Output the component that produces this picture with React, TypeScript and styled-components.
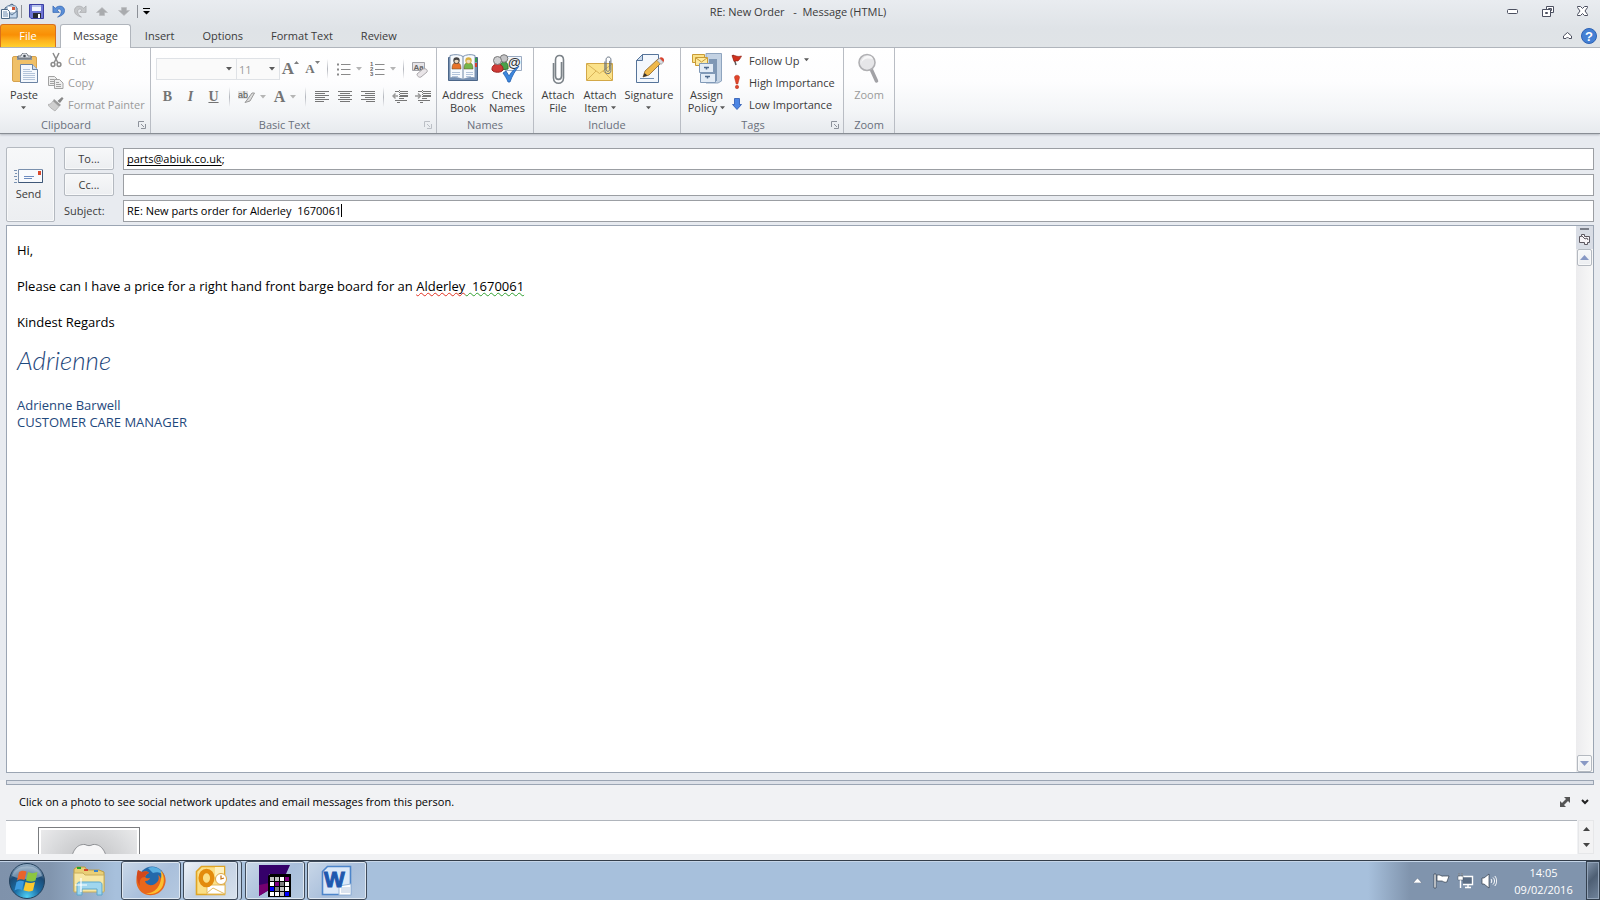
import React from 'react';
import styled, { createGlobalStyle, css } from 'styled-components';

const Global = createGlobalStyle`
  *, *::before, *::after { box-sizing: border-box; }
  body { margin: 0; background: #e8ebf0; }
  button, input, select {
    font: inherit; color: inherit; margin: 0; padding: 0;
    border: 0; background: none; border-radius: 0; outline: none;
  }
`;

const Page = styled.div`
  display: flex;
  flex-direction: column;
  min-height: 100vh;
  font: 11px/13px "Open Sans", "Noto Sans", sans-serif;
  color: #3b3b3b;
`;

/* Title bar and tabs */

const Chrome = styled.header`
  background: linear-gradient(#e9ecf0, #dfe3e7 60%, #e0e4e7);
`;
const TitleBar = styled.div`
  display: grid;
  grid-template-columns: 1fr auto 1fr;
  align-items: center;
  height: 24px;
  padding-bottom: 2px;
`;
const QuickAccess = styled.div`
  display: flex;
  align-items: center;
`;
const QuickButton = styled.button<{ $w?: number }>`
  width: ${p => p.$w ?? 22}px;
  height: 22px;
  display: grid;
  place-items: center;
`;
const QuickRule = styled.span`
  width: 1px;
  height: 13px;
  margin: 0 2px;
  background: #8c9097;
`;
const Title = styled.h1`
  margin: 0;
  padding-right: 4px;
  font-size: 11px;
  font-weight: 400;
  white-space: pre;
`;
const WindowButtons = styled.div`
  display: flex;
  justify-content: flex-end;
`;
const WindowButton = styled.button`
  width: 35px;
  height: 22px;
  display: grid;
  place-items: center;
`;
const TabRow = styled.nav`
  display: flex;
  height: 24px;
  border-bottom: 1px solid #b0b5bc;
`;
const Tab = styled.button<{ $active?: boolean }>`
  height: 24px;
  padding: 0 14px 2px;
  ${p => p.$active && css`
    padding: 0 12px 2px;
    background: #fff;
    border: 1px solid #b0b5bc;
    border-bottom: 0;
    border-radius: 3px 3px 0 0;
  `}
`;
const FileTab = styled.button`
  width: 56px;
  height: 23px;
  margin-right: 4px;
  padding-bottom: 1px;
  color: #fff;
  border: 1px solid #d9701c;
  border-bottom: 0;
  border-radius: 3px 3px 0 0;
  background: linear-gradient(#f9a51c, #f98f05 45%, #fdb21d 70%, #ffd02e);
`;
const TabTools = styled.div`
  display: flex;
  align-items: center;
  gap: 6px;
  margin-left: auto;
  padding-right: 3px;
`;
const ToolButton = styled.button`
  display: grid;
  place-items: center;
  min-width: 16px;
`;

/* Ribbon */

const Ribbon = styled.div`
  display: flex;
  height: 86px;
  background: linear-gradient(#fff, #fdfdfe 40%, #f3f5f7 75%, #e7eaee);
  border-bottom: 1px solid #888d94;
  box-shadow: 0 1px 2px #b4b9c1;
`;
const Group = styled.section<{ $w: number }>`
  display: flex;
  flex-direction: column;
  flex: 0 0 ${p => p.$w}px;
  padding-top: 2px;
  border-right: 1px solid #b9bdc4;
`;
const GroupBody = styled.div<{ $pad?: number }>`
  display: flex;
  height: 66px;
  padding: 0 ${p => p.$pad ?? 0}px;
`;
const GroupTitle = styled.div`
  display: flex;
  align-items: center;
  height: 17px;
  color: #696f7b;
  > h2 { flex: 1; margin: 0; font-size: 11px; font-weight: 400; text-align: center; }
`;
const Launcher = styled.button<{ $dim?: boolean }>`
  width: 18px;
  height: 8px;
  padding-left: 6px;
  display: grid;
  opacity: ${p => (p.$dim ? 0.5 : 1)};
`;
const LargeButton = styled.button<{ $w: number }>`
  display: flex;
  flex-direction: column;
  align-items: center;
  flex: 0 0 ${p => p.$w}px;
  padding-top: 3px;
  gap: 3px;
  &:disabled { color: #9a9a9a; }
`;
const LargeLabel = styled.span`
  display: flex;
  flex-direction: column;
  align-items: center;
`;
const LabelLine = styled.span`
  display: flex;
  align-items: center;
  justify-content: center;
  gap: 3px;
  height: 13px;
  white-space: nowrap;
`;
const SmallColumn = styled.div`
  display: flex;
  flex-direction: column;
`;
const SmallButton = styled.button`
  display: flex;
  align-items: center;
  gap: 4px;
  height: 22px;
  padding-bottom: 2px;
  white-space: nowrap;
  &:disabled { color: #9a9a9a; }
`;
const TextTools = styled.div`
  display: flex;
  flex-direction: column;
  padding: 5px 0 0 5px;
`;
const TextRow = styled.div`
  display: flex;
  align-items: center;
  height: 28px;
`;
const IconButton = styled.button<{ $w?: number }>`
  width: ${p => p.$w ?? 23}px;
  height: 22px;
  display: flex;
  align-items: center;
  justify-content: center;
  gap: 5px;
`;
const ToolRule = styled.span`
  width: 1px;
  height: 20px;
  margin: 0 4px;
  background: linear-gradient(transparent, #b3b6bd, transparent);
`;
const ComboBox = styled.span<{ $w: number }>`
  position: relative;
  display: flex;
  width: ${p => p.$w}px;
  height: 22px;
  margin-right: -1px;
  border: 1px solid #dfe2e6;
  background: #fafafa;
  color: #9a9a9a;
  > select { appearance: none; flex: 1; padding: 0 2px; opacity: 1; }
  > svg { position: absolute; right: 4px; top: 8px; pointer-events: none; }
`;
const Glyph = styled.span<{ $size?: number; $italic?: boolean; $under?: boolean }>`
  font: ${p => (p.$italic ? 'italic' : 'normal')} 700 ${p => p.$size ?? 14}px/16px "Liberation Serif", serif;
  color: #747474;
  text-decoration: ${p => (p.$under ? 'underline' : 'none')};
`;
const MarkSvg = styled.svg`
  align-self: flex-start;
  margin: 3px 0 0 -5px;
`;

/* Message header */

const Compose = styled.main`
  display: flex;
  flex-direction: column;
  flex: 1;
  padding: 13px 6px 7px;
  gap: 3px;
`;
const Envelope = styled.form`
  display: grid;
  grid-template-columns: 49px 50px 1fr;
  grid-template-rows: 26px 26px 23px;
  column-gap: 9px;
`;
const raised = css`
  border: 1px solid #b4b9c0;
  border-radius: 2px;
  background: linear-gradient(#f7f8f9, #eceef1);
  box-shadow: inset 0 0 0 1px #f8f9fa;
`;
const SendButton = styled.button`
  ${raised}
  grid-row: 1 / 4;
  display: flex;
  flex-direction: column;
  align-items: center;
  justify-content: center;
  gap: 3px;
  padding-right: 4px;
`;
const AddressButton = styled.button`
  ${raised}
  height: 23px;
`;
const SubjectLabel = styled.label`
  align-self: center;
  white-space: nowrap;
`;
const Field = styled.div`
  display: flex;
  align-items: center;
  height: 22px;
  margin-top: 1px;
  padding: 0 3px 1px;
  border: 1px solid #9b9ea3;
  background: #fff;
  color: #000;
`;
const FieldInput = styled.input<{ $fit?: boolean; $under?: boolean }>`
  height: 19px;
  line-height: 19px;
  white-space: pre;
  ${p => (p.$fit ? css`field-sizing: content;` : css`flex: 1;`)}
  ${p => p.$under && css`text-decoration: underline; text-underline-offset: 2px; text-decoration-skip-ink: none;`}
`;
const Caret = styled.i`
  width: 1px;
  height: 13px;
  background: #000;
`;

/* Message body */

const Editor = styled.div`
  display: flex;
  flex: 1;
  border: 1px solid #9ba5b3;
  background: #fff;
`;
const Letter = styled.article`
  display: flex;
  flex-direction: column;
  flex: 1;
  gap: 18px;
  padding: 15px 10px;
  color: #000;
  font-size: 13px;
  line-height: 18px;
  > p { margin: 0; white-space: pre-wrap; }
`;
const Squiggle = styled.span<{ $color: string }>`
  text-decoration: underline wavy ${p => p.$color} 1px;
  text-underline-offset: 1px;
  text-decoration-skip-ink: none;
`;
const Signature = styled.p`
  padding-bottom: 8px;
  color: #1f497d;
  font: italic 300 26px/22px "Segoe Script", "Bradley Hand ITC", Lato, sans-serif;
`;
const SignatureBlock = styled.p`
  color: #1f497d;
  line-height: 17px;
`;
const ScrollTrack = styled.div`
  display: flex;
  flex-direction: column;
  align-items: center;
  width: 17px;
  background: linear-gradient(90deg, #ececee, #f8f8f8);
`;
const RulerToggle = styled.button`
  width: 17px;
  height: 23px;
  padding-bottom: 3px;
  background: #d9dde5;
  display: grid;
  place-items: center;
`;
const ScrollButton = styled.button`
  ${raised}
  width: 15px;
  height: 17px;
  display: grid;
  place-items: center;
  &:last-child { margin-top: auto; }
`;

/* People pane */

const People = styled.aside`
  padding: 0 6px 6px;
  background: #f1f2f4;
`;
const Splitter = styled.div`
  height: 5px;
  border: 1px solid #9ba5b3;
  background: #dde1e8;
`;
const PeopleHead = styled.div`
  display: flex;
  align-items: center;
  justify-content: space-between;
  height: 35px;
  padding: 0 1px 2px 13px;
  color: #000;
`;
const PeopleTools = styled.div`
  display: flex;
  gap: 4px;
`;
const PeopleBody = styled.div`
  display: flex;
  height: 34px;
`;
const PeopleList = styled.div`
  flex: 1;
  padding: 6px 32px 0;
  border-top: 1px solid #b0b5bc;
  background: #fff;
  overflow: hidden;
`;
const PhotoFrame = styled.div`
  display: flex;
  justify-content: center;
  width: 102px;
  height: 102px;
  padding: 2px;
  border: 1px solid #7b7d80;
  background: #fff;
`;
const Photo = styled.div`
  flex: 1;
  display: flex;
  justify-content: center;
  padding-top: 13px;
  background: radial-gradient(circle at 50% 40px, #b9babc, #dcdddf 45px, #ececed 65px);
`;
const MiniScroll = styled.div`
  display: flex;
  flex-direction: column;
  justify-content: space-around;
  align-items: center;
  width: 16px;
  margin-left: 1px;
  border: 1px solid #e6e7e9;
  background: #f3f3f4;
`;

/* Taskbar */

const Taskbar = styled.footer`
  display: flex;
  align-items: stretch;
  height: 40px;
  border-top: 1px solid #333d4a;
  box-shadow: inset 0 1px #c5d5e8;
  background:
    linear-gradient(90deg, #7f92ab, #8195ae 50px, transparent 115px),
    linear-gradient(270deg, #8094ad, #8094ad 190px, transparent 232px),
    #a7c0dc;
`;
const StartButton = styled.button`
  width: 54px;
  display: grid;
  place-items: center;
`;
const Pinned = styled.button`
  width: 67px;
  padding-left: 3px;
  display: grid;
  place-items: center;
`;
const TaskButton = styled.button<{ $active?: boolean; $stack?: boolean }>`
  width: 60px;
  height: 39px;
  margin-right: 2px;
  display: grid;
  place-items: center;
  border: 1px solid #3f4b5b;
  border-radius: 3px;
  background: ${p => (p.$active
    ? 'linear-gradient(135deg, #eef3f8, #c3d1e3 50%, #d9e3ee)'
    : 'linear-gradient(135deg, #c9d7e8, #a9bfdb 55%, #b5c9e0)')};
  box-shadow: inset 0 0 0 1px #dfe8f2${p => (p.$stack ? ', 3px 0 0 #c3d3e6, 4px 0 0 #3f4b5b' : '')};
  ${p => p.$stack && css`width: 55px; margin-right: 7px;`}
`;
const Tray = styled.div`
  display: flex;
  align-items: center;
  margin-left: auto;
`;
const TrayButton = styled.button`
  width: 24px;
  height: 30px;
  display: grid;
  place-items: center;
`;
const Clock = styled.time`
  display: flex;
  flex-direction: column;
  align-items: center;
  width: 85px;
  color: #fff;
  line-height: 17px;
`;
const ShowDesktop = styled.button`
  align-self: stretch;
  width: 14px;
  border: 1px solid #33404f;
  box-shadow: inset 0 0 0 1px #93a4b9;
  background: linear-gradient(135deg, #8395ab, #4e5f74 45%, #71849c);
`;

/* Icons */

const Down = ({ c = '#5a5a5a', w = 6 }: { c?: string; w?: number }) => (
  <svg width={w} height="4" viewBox="0 0 6 4"><path d="M0 0h6L3 3.5z" fill={c} /></svg>
);
const SizeMark = ({ down }: { down?: boolean }) => (
  <MarkSvg width="5" height="3" viewBox="0 0 5 3"><path d={down ? 'M0 0h5L2.500 3z' : 'M0 3h5L2.500 0z'} fill="#7d7d7d" /></MarkSvg>
);
const LauncherIcon = () => (
  <svg width="8" height="8" viewBox="0 0 8 8" fill="none" stroke="#8d929b"><path d="M.5 6V.5H6M3 3l3 3M7.500 3v4.500H3" /></svg>
);
const MailIcon = () => (
  <svg width="17" height="17" viewBox="0 0 17 17">
    <path d="M4 5l7-4 5 4v9H4z" fill="#dce8f5" stroke="#3d5877" />
    <path d="M6 3h9v7H6z" fill="#fff" stroke="#7f9ab8" /><path d="M11 4h3v3h-3z" fill="#cf5536" />
    <path d="M5 8l6 4 5-4v7H8z" fill="#c5d9ee" stroke="#5c7897" />
    <path d="M.5 6.500h6l2 2v7h-8z" fill="#f5f9fd" stroke="#4d6885" />
    <path d="M2 9h4M2 11h5M2 13h5" stroke="#6f8db0" />
  </svg>
);
const SaveIcon = () => (
  <svg width="15" height="15" viewBox="0 0 15 15">
    <path d="M.5.5h14v14H2l-1.500-1.500z" fill="#6d75d4" stroke="#3a3ea2" />
    <path d="M3 1h9v6H3z" fill="#f3f6fd" /><path d="M3 1h9v2H3z" fill="#b9c6ec" />
    <path d="M4 9h8v5H4z" fill="#26292f" /><path d="M9 10h2v4H9z" fill="#fff" />
  </svg>
);
const UndoIcon = ({ flip, c, d }: { flip?: boolean; c: string; d: string }) => (
  <svg width="13" height="13" viewBox="0 0 14 14">
    <g transform={flip ? 'translate(14 0) scale(-1 1)' : undefined}>
      <path d="M1 1v7h7L5.500 5.500c2-2 4.500-1 4.500 1.500 0 3-2 4.500-4 6 4-1 7.500-3 7.500-7C13.500 1 7.500-.5 3.500 3.500z" fill={c} stroke={d} strokeWidth=".7" />
    </g>
  </svg>
);
const ArrowUp = ({ down }: { down?: boolean }) => (
  <svg width="12" height="9" viewBox="0 0 12 9"><path d={down ? 'M6 8.500l5.500-5H8.500V.5h-5v3H.5z' : 'M6 .5l5.500 5H8.500v3h-5v-3H.5z'} fill="#a9abae" stroke="#b9bbbe" strokeWidth=".6" /></svg>
);
const PasteIcon = () => (
  <svg width="32" height="32" viewBox="0 0 32 32">
    <rect x="4.500" y="3.500" width="24" height="25" rx="1.500" fill="#f0c068" stroke="#d6a24e" />
    <path d="M9 3h15v4H9z" fill="#8e969f" /><path d="M10 5h13V3h-3c0-4-7-4-7 0h-3z" fill="#dfe3e8" stroke="#555d67" strokeWidth=".8" />
    <circle cx="16.500" cy="3" r="1.300" fill="#454d57" />
    <path d="M12.500 11.500h12l5 5v13h-17z" fill="#f4f8fd" stroke="#6b83a3" />
    <path d="M24.500 11.500v5h5" fill="#cfdcec" stroke="#6b83a3" />
    <path d="M15 16.500h7M15 18.500h9M15 20.500h12M15 22.500h12M15 24.500h12M15 26.500h12" stroke="#b3c4da" />
  </svg>
);
const CutIcon = () => (
  <svg width="16" height="16" viewBox="0 0 16 16" fill="none" stroke="#8b8b8b" strokeWidth="1.500">
    <path d="M5 1l5 10M11 1L6 11" /><circle cx="5" cy="12.500" r="1.900" /><circle cx="11" cy="12.500" r="1.900" />
  </svg>
);
const CopyIcon = () => (
  <svg width="16" height="16" viewBox="0 0 16 16" stroke="#a2a2a2">
    <path d="M.5 2.500h6l3 3v6h-9z" fill="#eee" /><path d="M2 5.500h4M2 7.500h4M2 9.500h4" />
    <path d="M6.500 5.500h5l3.500 3.500v5.500H6.500z" fill="#eee" /><path d="M8 8.500h3M8 10.500h5M8 12.500h5" />
  </svg>
);
const PainterIcon = () => (
  <svg width="16" height="16" viewBox="0 0 16 16">
    <path d="M14 1l1.500 1.500L12 7l-2.500-2z" fill="#888" />
    <path d="M6 3l7 6-2 1.500L5 5z" fill="#999" /><path d="M5 5l6 5.500-4 4.500C4 13 1 11 0 8.500c2 0 4-1.500 5-3.500z" fill="#cfcfcf" stroke="#a5a5a5" strokeWidth=".7" />
  </svg>
);
const ListIcon = ({ num }: { num?: boolean }) => (
  <svg width="15" height="14" viewBox="0 0 15 14" stroke="#8a8a8a">
    <path d="M5 2.500h9.500M5 7.500h9.500M5 12.500h9.500" />
    {num
      ? <g stroke="none" fill="#666" fontSize="6" fontWeight="700" fontFamily="Liberation Sans, sans-serif"><text x="0" y="4">1</text><text x="0" y="9">2</text><text x="0" y="14">3</text></g>
      : <path d="M1 2.500h2M1 7.500h2M1 12.500h2" strokeWidth="2" />}
  </svg>
);
const EraserIcon = () => (
  <svg width="18" height="17" viewBox="0 0 18 17">
    <path d="M1.500 1.500h12v8h-12z" fill="#e6e4e8" stroke="#a3a3a8" />
    <text x="2.500" y="8.500" fontSize="8" fontWeight="700" fill="#666" fontFamily="Liberation Sans, sans-serif">Aa</text>
    <path d="M6 13l6-5c3-1 5 1 4 3l-6 5c-2 1-4-1-4-3z" fill="#e9e5e8" stroke="#a9a6aa" />
  </svg>
);
const HighlightIcon = () => (
  <svg width="17" height="14" viewBox="0 0 17 14">
    <path d="M0 1h10v8H0z" fill="#e2e2e2" />
    <text x="0" y="8" fontSize="9" fill="#555" fontFamily="Liberation Sans, sans-serif">ab</text>
    <path d="M9 10l5-7h2.500L12 11l-5 1.500z" fill="#ddd" stroke="#999" />
  </svg>
);
const AlignIcon = ({ k }: { k: 'l' | 'c' | 'r' }) => (
  <svg width="14" height="12" viewBox="0 0 14 12" stroke="#777">
    <path d={{
      l: 'M0 .5h14M0 2.500h10M0 4.500h14M0 6.500h10M0 8.500h14M0 10.500h9',
      c: 'M0 .5h14M2 2.500h10M0 4.500h14M2 6.500h10M0 8.500h14M2 10.500h10',
      r: 'M0 .5h14M4 2.500h10M0 4.500h14M4 6.500h10M0 8.500h14M5 10.500h9',
    }[k]} />
  </svg>
);
const IndentIcon = ({ right }: { right?: boolean }) => (
  <svg width="16" height="14" viewBox="0 0 16 14" stroke="#777" fill="none">
    <path d="M3 1.500h4M8 1.500h8M8 3.500h8M8 8.500h4M3 10.500h4M8 10.500h7M5 12.500h2" /><path d="M8 6h8" strokeWidth="2" />
    <path d="M7.500 0v14" strokeDasharray="1 1" />
    <path d={right ? 'M0 6h5M3 3.500L5.500 6 3 8.500' : 'M1 6h5M3.500 3.500L1 6l2.500 2.500'} stroke="#9a9a9a" strokeWidth="1.500" />
  </svg>
);
const Person = ({ x, y, c, h }: { x: number; y: number; c: string; h: string }) => (
  <g transform={`translate(${x} ${y})`}>
    <path d="M0 12c0-6 2-6 4.500-6s4.500 0 4.500 6z" fill={c} stroke="#5c4a2a" strokeWidth=".5" /><circle cx="4.500" cy="3.500" r="3.200" fill={h} /><path d="M2.500 3.500c1-1 3-1 4 0v1.500c-1 1.500-3 1.500-4 0z" fill="#ecd9bf" />
  </g>
);
const AddressBookIcon = () => (
  <svg width="32" height="32" viewBox="0 0 32 32">
    <path d="M1.500 4.500h29v23h-29z" fill="#7590b4" stroke="#4c6688" />
    <path d="M3 2.500c5-1.500 10-1 13 1 3-2 8-2.500 12-1V25c-5-1-9 0-12 1.500C13 25 8 24 3 25z" fill="#f7fafd" stroke="#7c93b0" />
    <path d="M16 3.500v23" stroke="#6f87a5" /><path d="M28 5h2v4h-2z" fill="#3c9b4a" /><path d="M28 10h2v4h-2z" fill="#d4402f" />
    <Person x={5} y={4} c="#e8742a" h="#444" /><Person x={17} y={4} c="#74b64a" h="#d9b040" />
    <path d="M5 19.500h8M5 21.500h8M5 23.500h6M19 19.500h7M19 21.500h7M19 23.500h5" stroke="#b3c4da" />
  </svg>
);
const CheckNamesIcon = () => (
  <svg width="32" height="32" viewBox="0 0 32 32">
    <path d="M14.500 3.500h16v14h-16z" fill="#f2f6fb" stroke="#9aabc2" />
    <text x="17" y="14" fontSize="13" fontWeight="700" fill="#333" fontFamily="Liberation Sans, sans-serif">@</text>
    <path d="M9 17c-1-11 9-11 8-1z" fill="#4aa04a" stroke="#2d7a31" /><circle cx="13" cy="5.500" r="3.800" fill="#c3c3c5" stroke="#777" />
    <path d="M1 17c-1-8 12-8 11 0-2 3-9 3-11 0z" fill="#cf3a36" stroke="#9c2320" /><circle cx="6.500" cy="7.500" r="4" fill="#cfcfd1" stroke="#777" />
    <path d="M12 20l3-2 3 5c3-5 6-8 10-10-4 5-7 10-9 16h-2c-1-3-3-6-5-9z" fill="#3d87dd" stroke="#2360b0" strokeWidth=".8" />
  </svg>
);
const Clip = ({ c = '#7b8288' }: { c?: string }) => (
  <path d="M19.500 9v14c0 4.500-6 4.500-6 0V7c0-6 8-6 8 0v18c0 7-10 7-10 0V10" fill="none" stroke={c} strokeWidth="1.600" />
);
const AttachFileIcon = () => <svg width="32" height="32" viewBox="0 0 32 32"><Clip /></svg>;
const AttachItemIcon = () => (
  <svg width="32" height="32" viewBox="0 0 32 32">
    <path d="M2.500 10.500h26v17h-26z" fill="#fbe28a" stroke="#d3a848" /><path d="M3 11l12.500 9.500L28 11M3 27l9-9M28 27l-9-9" fill="none" stroke="#d9b458" />
    <g transform="translate(14 2.500) scale(.6)"><Clip c="#5d6b7b" /></g>
  </svg>
);
const SignatureIcon = () => (
  <svg width="32" height="32" viewBox="0 0 32 32">
    <path d="M9.500 1.500h16v28h-22v-22z" fill="#f4f8fd" stroke="#56749a" /><path d="M9.500 1.500v6h-6z" fill="#cadaec" stroke="#56749a" />
    <path d="M7 25.500h14" stroke="#7190b6" />
    <path d="M10 24l2-6L25 6l3.500 3.500L16 22z" fill="#f0b94a" stroke="#8d6327" strokeWidth=".8" /><path d="M10 24l1.500-4 3 2.500z" fill="#333" />
    <path d="M24 7.500L26.500 5l4 4-2.500 2.500z" fill="#d9dde3" stroke="#777" strokeWidth=".6" /><path d="M26.500 5c2-2 6 1 4 4z" fill="#d8432f" />
  </svg>
);
const PolicyIcon = () => (
  <svg width="32" height="32" viewBox="0 0 32 32">
    <path d="M15 .5h15.500V28L27 30H15z" fill="#c3d2e3" stroke="#8fa5bf" /><path d="M18 6h8v22h-8z" fill="#7e97b5" />
    <path d="M1.500 1.500h12v8h-12z" fill="#fbe28a" stroke="#c99b36" /><path d="M4.500 4.500h12v8h-12z" fill="#fdeaa2" stroke="#c99b36" /><path d="M5 5l5.500 4L16 5" fill="none" stroke="#c99b36" />
    <path d="M8.500 10.500h14v9h-14z" fill="#e3ecf6" stroke="#8099b7" /><path d="M9.500 20.500h15v9h-15z" fill="#e3ecf6" stroke="#8099b7" />
    <path d="M13 14.500h5M14 23.500h5M15.500 15v1.500M16.500 24v1.500" fill="none" stroke="#4f6b8e" strokeWidth="1.500" />
  </svg>
);
const FlagIcon = () => (
  <svg width="16" height="16" viewBox="0 0 16 16"><path d="M4 3l3 10" stroke="#5b5b5b" strokeWidth="1.500" /><path d="M3 3.500c3-1 4 2 9.500.5-1 2-1.500 3-3.500 5-1.500 0-2.500-.5-4 .5z" fill="#d0321f" stroke="#8c1c10" strokeWidth=".6" /></svg>
);
const HighIcon = () => (
  <svg width="16" height="16" viewBox="0 0 16 16" fill="#e0442a" stroke="#b3301a" strokeWidth=".5"><path d="M5.500 3.500c0-3 5-3 5 0L8.800 10H7.200z" /><circle cx="8" cy="13" r="1.700" /></svg>
);
const LowIcon = () => (
  <svg width="16" height="16" viewBox="0 0 16 16"><path d="M5.500 2.500h5v6h2L8 13.500l-4.500-5h2z" fill="#4d86e4" stroke="#2a57b0" strokeWidth=".8" /></svg>
);
const ZoomIcon = () => (
  <svg width="32" height="32" viewBox="0 0 32 32"><path d="M18.500 17l5 11" stroke="#a2a2a6" strokeWidth="3.500" strokeLinecap="round" /><circle cx="14" cy="9.500" r="8" fill="#e6e6e8" stroke="#b0b0b3" strokeWidth="1.600" /><path d="M8 11c2-6 7-6 12-5-1-5-11-5-12 5z" fill="#f7f7f8" /></svg>
);
const SendIcon = () => (
  <svg width="29" height="15" viewBox="0 0 29 15">
    <path d="M0 1.500h3M1 4.500h2M0 7.500h3M1 10.500h2M0 13.500h3" stroke="#7a92b3" />
    <path d="M4.500.5h24v13h-24z" fill="#f8fafd" stroke="#7a90ad" /><path d="M4.500 13.500h24V1" fill="none" stroke="#3f5878" />
    <path d="M24 2h3v4h-3z" fill="#d9492c" /><path d="M10 7.500h10M10 9.500h8" stroke="#6d8cc0" />
  </svg>
);
const OrbIcon = () => (
  <svg width="38" height="38" viewBox="0 0 38 38">
    <defs>
      <radialGradient id="orb" cx=".5" cy=".95" r=".9"><stop offset="0" stopColor="#4fd0f4" /><stop offset=".4" stopColor="#1b6ea6" /><stop offset=".75" stopColor="#1c4a74" /><stop offset="1" stopColor="#8ba6bf" /></radialGradient>
    </defs>
    <circle cx="19" cy="19" r="17.500" fill="url(#orb)" stroke="#24425e" />
    <path d="M4 14C7 1 31 1 34 14c-8 4-22 4-30 0z" fill="#d5e2ee" opacity=".45" />
    <path d="M11 10c3-2 5-1.500 7.500-.5L16.500 18c-2.500-1-4.500-1.500-7.500.5z" fill="#e9642b" />
    <path d="M20 10c3 1.500 5.500 1.500 9.500 0l-2 8.500c-3 1.500-6.500 1-9.500 0z" fill="#8dc63f" />
    <path d="M8.500 20c3-2 5.500-1.500 7.500-.5L14 28c-2.500-1-4.500-1-7.500.5z" fill="#3d9be0" />
    <path d="M17.500 20c3 1 6 1.500 9.500 0l-2 8.500c-3 1.500-6.500 1-9.500-.2z" fill="#fdc92e" />
  </svg>
);
const ExplorerIcon = () => (
  <svg width="34" height="32" viewBox="0 0 34 32">
    <path d="M2 4l3-2h8l2 3h12l5 2v19H2z" fill="#e9cf76" stroke="#b99b46" />
    <path d="M5 2h4v2H5z" fill="#28a428" /><path d="M12 4h4v2h-4z" fill="#d4432b" /><path d="M22 5h4v2h-4z" fill="#3a84c8" />
    <path d="M2 8h9l2 2h19v17H2z" fill="#f7e7a4" stroke="#c9ae5c" />
    <path d="M5 30V20c0-2 1-3 3-3h19c2 0 3 1 3 3v10h-5v-6H10v6z" fill="#9fd6ee" stroke="#5da7cc" />
    <path d="M9 13v14M3 20h12" stroke="#fff" strokeWidth="1.200" />
  </svg>
);
const FirefoxIcon = () => (
  <svg width="32" height="32" viewBox="0 0 32 32">
    <circle cx="17" cy="14.500" r="13" fill="#2469ab" /><path d="M13 3c7-3 14 1 16 8-4-5-8-4-11-3z" fill="#59aee0" />
    <path d="M3 5c1 1 2 2 4 2 3-1 6-1 7 1-3 1-3 3-4 4 2 2 3 1 5 1-1 3-4 3-5 3 1 5 9 6 13 0 1-2 1-4 0-6 2 1 3 3 3 5 2-3 1-8-1-10 6 4 7 11 4 17C23 34 4 33 1.500 18 1 12 2 9 3 5z" fill="#e8671b" />
    <path d="M26 6c4 5 4 14-1 19-4 4-10 5-14 3 9 1 17-8 15-22z" fill="#fcbf2f" /><path d="M3 5c-2 6-1 12 2 16-1-6 1-9 5-9 0-2 1-3 4-4-2-2-4-1.500-7-1z" fill="#d2481c" />
  </svg>
);
const OutlookIcon = () => (
  <svg width="32" height="32" viewBox="0 0 32 32">
    <path d="M1.500 6.500l5-5h23v28h-28z" fill="#fbdf86" stroke="#e0a524" strokeWidth="1.600" /><path d="M20 2h9v10h-9z" fill="#fdf0c0" />
    <path d="M12 20h18v9H12z" fill="#fff" stroke="#e3bb62" /><path d="M12 28l6-5 12 6" fill="none" stroke="#e3bb62" />
    <ellipse cx="11.500" cy="13" rx="5.800" ry="7" fill="none" stroke="#e38b0d" strokeWidth="4.500" />
    <circle cx="26" cy="14" r="5.500" fill="#fff" stroke="#dca645" /><path d="M26 10.500V14l3-1" fill="none" stroke="#c46d10" strokeWidth="1.200" />
  </svg>
);
const cells = ['#c0c0c0', '#c0c0c0', '#fff', '#800080', '#fff', '#800080', '#808080', '#fff', '#00f', '#808080', '#c0c0c0', '#fff', '#fff', '#fff', '#c0c0c0', '#00f'];
const GridAppIcon = () => (
  <svg width="32" height="32" viewBox="0 0 32 32">
    <path d="M0 0h31l-4 9H10v16L0 31z" fill="#35006a" /><path d="M0 20l10-2v7L0 31z" fill="#750070" />
    <path d="M11 9h21v23H9V11z" fill="#000" />
    {cells.map((c, i) => <rect key={i} x={11 + (i % 4) * 5} y={12 + Math.floor(i / 4) * 5} width="4" height="4" fill={c} />)}
  </svg>
);
const WordIcon = () => (
  <svg width="32" height="32" viewBox="0 0 32 32">
    <path d="M1.500 6.500l5-5h23v28h-28z" fill="#dbe8f8" stroke="#4d85ca" strokeWidth="1.600" /><path d="M18 21l12-2v11H18z" fill="#fff" stroke="#9db8d8" />
    <path d="M20 23h9M20 25h9M20 27h9" stroke="#b5c7df" />
    <text x="3" y="22" fontSize="22" fontWeight="700" fill="#1f58ae" stroke="#1f58ae" fontFamily="Liberation Sans, sans-serif">W</text>
  </svg>
);

const Large = ({ w, icon, lines, arrow, disabled }: { w: number; icon: React.ReactNode; lines: string[]; arrow?: 'inline' | 'below'; disabled?: boolean }) => (
  <LargeButton $w={w} disabled={disabled}>
    {icon}
    <LargeLabel>
      {lines.map((l, i) => <LabelLine key={l}>{l}{arrow === 'inline' && i === lines.length - 1 && <Down w={5} />}</LabelLine>)}
      {arrow === 'below' && <LabelLine><Down w={5} /></LabelLine>}
    </LargeLabel>
  </LargeButton>
);

const RibbonGroup = ({ w, title, pad, launcher, children }: { w: number; title: string; pad?: number; launcher?: 'on' | 'off'; children: React.ReactNode }) => (
  <Group $w={w}>
    <GroupBody $pad={pad}>{children}</GroupBody>
    <GroupTitle>
      <h2>{title}</h2>
      {launcher && <Launcher $dim={launcher === 'off'} aria-label={`${title} options`}><LauncherIcon /></Launcher>}
    </GroupTitle>
  </Group>
);

export default function App() {
  return (
    <Page>
      <Global />
      <Chrome>
        <TitleBar>
          <QuickAccess>
            <QuickButton $w={19} aria-label="Message menu"><MailIcon /></QuickButton>
            <QuickRule />
            <QuickButton $w={24} aria-label="Save"><SaveIcon /></QuickButton>
            <QuickButton $w={21} aria-label="Undo"><UndoIcon c="#5a8fd8" d="#2d5fae" /></QuickButton>
            <QuickButton aria-label="Redo"><UndoIcon flip c="#c4c6c9" d="#a5a7aa" /></QuickButton>
            <QuickButton aria-label="Previous item"><ArrowUp /></QuickButton>
            <QuickButton aria-label="Next item"><ArrowUp down /></QuickButton>
            <QuickRule />
            <QuickButton $w={12} aria-label="Customise toolbar">
              <svg width="7" height="7" viewBox="0 0 7 7"><path d="M0 0h7v1H0zM0 3h7L3.500 6.500z" /></svg>
            </QuickButton>
          </QuickAccess>
          <Title>{'RE: New Order   -  Message (HTML)'}</Title>
          <WindowButtons>
            <WindowButton aria-label="Minimise"><svg width="11" height="5" viewBox="0 0 11 5"><rect x=".5" y=".5" width="10" height="4" rx="1" fill="#fff" stroke="#4c5060" /></svg></WindowButton>
            <WindowButton aria-label="Restore"><svg width="12" height="11" viewBox="0 0 12 11" fill="#fff" stroke="#4c5060"><path d="M4.500.5h7v6h-7zM6.500 2.500h3v2h-3z" /><path d="M.5 3.500h8v7h-8zM3.500 6.500h2v1h-2z" /></svg></WindowButton>
            <WindowButton aria-label="Close"><svg width="11" height="10" viewBox="0 0 11 10"><path d="M.5.5h3l2 2 2-2h3v1L8 5l2.500 3.500v1h-3l-2-2-2 2h-3v-1L3 5 .5 1.500z" fill="#fff" stroke="#4c5060" /></svg></WindowButton>
          </WindowButtons>
        </TitleBar>
        <TabRow>
          <FileTab>File</FileTab>
          <Tab $active>Message</Tab>
          <Tab>Insert</Tab>
          <Tab>Options</Tab>
          <Tab>Format Text</Tab>
          <Tab>Review</Tab>
          <TabTools>
            <ToolButton aria-label="Collapse ribbon"><svg width="9" height="7" viewBox="0 0 9 7"><path d="M4.500.5l4 3.500v2.500H6L4.500 5 3 6.500H.5V4z" fill="#fff" stroke="#4c5060" /></svg></ToolButton>
            <ToolButton aria-label="Help"><svg width="16" height="16" viewBox="0 0 16 16"><circle cx="8" cy="8" r="7.500" fill="#4480d4" stroke="#2d62b4" /><text x="8" y="13" textAnchor="middle" fontSize="13" fontWeight="700" fill="#fff" fontFamily="Liberation Sans, sans-serif">?</text></svg></ToolButton>
          </TabTools>
        </TabRow>
      </Chrome>

      <Ribbon>
        <RibbonGroup w={151} title="Clipboard" launcher="on">
          <Large w={48} icon={<PasteIcon />} lines={['Paste']} arrow="below" />
          <SmallColumn>
            <SmallButton disabled><CutIcon />Cut</SmallButton>
            <SmallButton disabled><CopyIcon />Copy</SmallButton>
            <SmallButton disabled><PainterIcon />Format Painter</SmallButton>
          </SmallColumn>
        </RibbonGroup>
        <RibbonGroup w={286} title="Basic Text" launcher="off">
          <TextTools>
            <TextRow>
              <ComboBox $w={81}><select aria-label="Font" disabled><option></option></select><Down /></ComboBox>
              <ComboBox $w={44}><select aria-label="Font size" disabled><option>11</option></select><Down /></ComboBox>
              <IconButton aria-label="Grow font"><Glyph $size={17}>A</Glyph><SizeMark /></IconButton>
              <IconButton $w={21} aria-label="Shrink font"><Glyph $size={13}>A</Glyph><SizeMark down /></IconButton>
              <ToolRule />
              <IconButton $w={34} aria-label="Bullets"><ListIcon /><Down c="#b5b5b5" /></IconButton>
              <IconButton $w={33} aria-label="Numbering"><ListIcon num /><Down c="#b5b5b5" /></IconButton>
              <ToolRule />
              <IconButton aria-label="Clear formatting"><EraserIcon /></IconButton>
            </TextRow>
            <TextRow>
              <IconButton aria-label="Bold"><Glyph>B</Glyph></IconButton>
              <IconButton aria-label="Italic"><Glyph $italic>I</Glyph></IconButton>
              <IconButton aria-label="Underline"><Glyph $under>U</Glyph></IconButton>
              <ToolRule />
              <IconButton $w={35} aria-label="Highlight"><HighlightIcon /><Down c="#b5b5b5" /></IconButton>
              <IconButton $w={32} aria-label="Font colour"><Glyph $size={16}>A</Glyph><Down c="#b5b5b5" /></IconButton>
              <ToolRule />
              <IconButton aria-label="Align left"><AlignIcon k="l" /></IconButton>
              <IconButton aria-label="Centre"><AlignIcon k="c" /></IconButton>
              <IconButton aria-label="Align right"><AlignIcon k="r" /></IconButton>
              <ToolRule />
              <IconButton aria-label="Decrease indent"><IndentIcon /></IconButton>
              <IconButton aria-label="Increase indent"><IndentIcon right /></IconButton>
            </TextRow>
          </TextTools>
        </RibbonGroup>
        <RibbonGroup w={97} title="Names" pad={4}>
          <Large w={44} icon={<AddressBookIcon />} lines={['Address', 'Book']} />
          <Large w={44} icon={<CheckNamesIcon />} lines={['Check', 'Names']} />
        </RibbonGroup>
        <RibbonGroup w={147} title="Include" pad={3}>
          <Large w={42} icon={<AttachFileIcon />} lines={['Attach', 'File']} />
          <Large w={42} icon={<AttachItemIcon />} lines={['Attach', 'Item']} arrow="inline" />
          <Large w={56} icon={<SignatureIcon />} lines={['Signature']} arrow="below" />
        </RibbonGroup>
        <RibbonGroup w={163} title="Tags" pad={3} launcher="on">
          <Large w={45} icon={<PolicyIcon />} lines={['Assign', 'Policy']} arrow="inline" />
          <SmallColumn>
            <SmallButton><FlagIcon />Follow Up<Down w={5} /></SmallButton>
            <SmallButton><HighIcon />High Importance</SmallButton>
            <SmallButton><LowIcon />Low Importance</SmallButton>
          </SmallColumn>
        </RibbonGroup>
        <RibbonGroup w={51} title="Zoom">
          <Large w={50} icon={<ZoomIcon />} lines={['Zoom']} disabled />
        </RibbonGroup>
      </Ribbon>

      <Compose>
        <Envelope onSubmit={e => e.preventDefault()}>
          <SendButton><SendIcon />Send</SendButton>
          <AddressButton type="button">To...</AddressButton>
          <Field>
            <FieldInput $fit $under aria-label="To" defaultValue="parts@abiuk.co.uk" />;
          </Field>
          <AddressButton type="button">Cc...</AddressButton>
          <Field><FieldInput aria-label="Cc" /></Field>
          <SubjectLabel htmlFor="subject">Subject:</SubjectLabel>
          <Field>
            <FieldInput $fit id="subject" defaultValue="RE: New parts order for Alderley  1670061" />
            <Caret />
          </Field>
        </Envelope>
        <Editor>
          <Letter>
            <p>Hi,</p>
            <p>Please can I have a price for a right hand front barge board for an <Squiggle $color="#e03020">Alderley</Squiggle><Squiggle $color="#2fa02f">{'  1670061'}</Squiggle></p>
            <p>Kindest Regards</p>
            <Signature>Adrienne</Signature>
            <SignatureBlock>Adrienne Barwell<br />CUSTOMER CARE MANAGER</SignatureBlock>
          </Letter>
          <ScrollTrack>
            <RulerToggle aria-label="Show ruler">
              <svg width="13" height="20" viewBox="0 0 13 20"><path d="M2 2h9v2H2z" fill="#7b7f88" /><path d="M1.500 10.500h2v-2h3v2h5v6h-2v2h-3v-2h-5z" fill="#f7f4f7" stroke="#5d5860" /><path d="M4 10l3 3 2-1 1 2" fill="none" stroke="#5d5860" /></svg>
            </RulerToggle>
            <ScrollButton aria-label="Scroll up"><svg width="9" height="5" viewBox="0 0 9 5"><path d="M4.500 0L9 5H0z" fill="#8798c4" /></svg></ScrollButton>
            <ScrollButton aria-label="Scroll down"><svg width="9" height="5" viewBox="0 0 9 5"><path d="M4.500 5L9 0H0z" fill="#8798c4" /></svg></ScrollButton>
          </ScrollTrack>
        </Editor>
      </Compose>

      <People>
        <Splitter />
        <PeopleHead>
          Click on a photo to see social network updates and email messages from this person.
          <PeopleTools>
            <ToolButton aria-label="Expand"><svg width="10" height="10" viewBox="0 0 10 10" fill="#555"><path d="M4 0h6v6L8 4 4 8l2 2H0V4l2 2 4-4z" /></svg></ToolButton>
            <ToolButton aria-label="Collapse"><svg width="8" height="6" viewBox="0 0 8 6"><path d="M1 1l3 3 3-3" fill="none" stroke="#222" strokeWidth="2" /></svg></ToolButton>
          </PeopleTools>
        </PeopleHead>
        <PeopleBody>
          <PeopleList>
            <PhotoFrame><Photo>
              <svg width="40" height="50" viewBox="0 0 40 50"><path d="M1 22C3 7 8 1 16 1.500c3 1.500 5 1.500 8 0C32 1 37 7 39 22v30H1z" fill="#f6f6f7" stroke="#8e9094" /></svg>
            </Photo></PhotoFrame>
          </PeopleList>
          <MiniScroll>
            <svg width="7" height="4" viewBox="0 0 7 4"><path d="M3.500 0L7 4H0z" fill="#444" /></svg>
            <svg width="7" height="4" viewBox="0 0 7 4"><path d="M3.500 4L7 0H0z" fill="#444" /></svg>
          </MiniScroll>
        </PeopleBody>
      </People>

      <Taskbar>
        <StartButton aria-label="Start"><OrbIcon /></StartButton>
        <Pinned aria-label="File Explorer"><ExplorerIcon /></Pinned>
        <TaskButton aria-label="Firefox"><FirefoxIcon /></TaskButton>
        <TaskButton $active $stack aria-label="Outlook"><OutlookIcon /></TaskButton>
        <TaskButton aria-label="Grid application"><GridAppIcon /></TaskButton>
        <TaskButton aria-label="Word"><WordIcon /></TaskButton>
        <Tray>
          <TrayButton aria-label="Hidden icons"><svg width="9" height="5" viewBox="0 0 9 5"><path d="M4.500 0L9 5H0z" fill="#fff" stroke="#56677d" strokeWidth=".5" /></svg></TrayButton>
          <TrayButton aria-label="Action centre"><svg width="17" height="16" viewBox="0 0 17 16"><path d="M1 1h2v14H1z" fill="#fff" stroke="#303c4b" strokeWidth=".7" /><path d="M4 2c3-1 5 2 6 1h6c-1 3-2 5-2 6-3 1-4-1-5-1H4z" fill="#fff" stroke="#303c4b" strokeWidth=".7" /></svg></TrayButton>
          <TrayButton aria-label="Network"><svg width="17" height="16" viewBox="0 0 17 16"><path d="M5 3.500h10.500v8H6" fill="#5a6c83" stroke="#fff" strokeWidth="1.400" /><path d="M8 14.500h6M11 12v3M3.500 7v8" stroke="#fff" strokeWidth="1.400" /><path d="M1 3h5v4H1zM1.500 0h1v3h-1zM4.500 0h1v3h-1z" fill="#fff" stroke="#303c4b" strokeWidth=".4" /></svg></TrayButton>
          <TrayButton aria-label="Volume"><svg width="16" height="16" viewBox="0 0 16 16"><path d="M1 5h2l5-4v14l-5-4H1z" fill="#fff" stroke="#303c4b" strokeWidth=".7" /><path d="M10 6c1 1 1 3 0 4M12 4.500c2 2 2 5 0 7M13.800 3c2.500 3 2.500 7 0 10" fill="none" stroke="#fff" /></svg></TrayButton>
          <Clock dateTime="2016-02-09T14:05"><span>14:05</span><span>09/02/2016</span></Clock>
          <ShowDesktop aria-label="Show desktop" />
        </Tray>
      </Taskbar>
    </Page>
  );
}
